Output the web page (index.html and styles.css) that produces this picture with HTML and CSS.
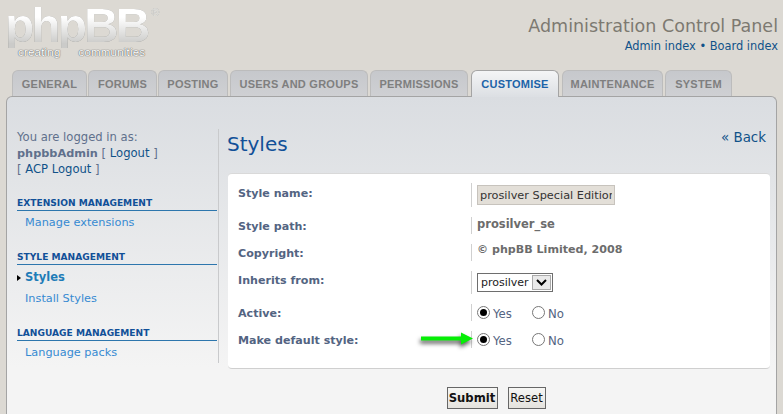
FILE: index.html
```html
<!DOCTYPE html>
<html lang="en">
  <head>
    <meta charset="UTF-8" />
    <meta name="viewport" content="width=device-width, initial-scale=1.0" />
    <title>Administration Control Panel</title>
    <link rel="stylesheet" href="styles.css">
  </head>
  <body>
    <div class="header">
      <div class="logo">
        <div class="logo-word">phpBB<sup>®</sup></div>
        <div class="logo-sub"><span>creating</span><span>communities</span></div>
      </div>
      <div class="header-right">
        <h1>Administration Control Panel</h1>
        <p><a href="#">Admin index</a> • <a href="#">Board index</a></p>
      </div>
    </div>

    <!-- Tabs -->
    <ul class="tabs">
      <li class="tab t-general">General</li>
      <li class="tab t-forums">Forums</li>
      <li class="tab t-posting">Posting</li>
      <li class="tab t-users">Users and groups</li>
      <li class="tab t-perms">Permissions</li>
      <li class="tab t-custom active">Customise</li>
      <li class="tab t-maint">Maintenance</li>
      <li class="tab t-system">System</li>
    </ul>

    <div class="panel">
      <!-- Side menu -->
      <div class="menu">
        <p class="login">You are logged in as:<br /><b>phpbbAdmin</b> [ <a href="#">Logout</a> ]<br />[ <a href="#">ACP Logout</a> ]</p>
        <h3>Extension management</h3>
        <a class="item" href="#">Manage extensions</a>
        <h3>Style management</h3>
        <a class="item current" href="#">Styles</a>
        <a class="item" href="#">Install Styles</a>
        <h3>Language management</h3>
        <a class="item" href="#">Language packs</a>
      </div>

      <!-- Main -->
      <div class="main">
        <div class="title-row">
          <h2>Styles</h2>
          <a class="back" href="#">« Back</a>
        </div>
        <div class="card">
          <div class="row row-name">
            <label>Style name:</label>
            <div class="value"><input class="text-input" type="text" value="prosilver Special Edition" /></div>
          </div>
          <div class="row row-path">
            <label>Style path:</label>
            <div class="value"><b>prosilver_se</b></div>
          </div>
          <div class="row row-copy">
            <label>Copyright:</label>
            <div class="value"><b>© phpBB Limited, 2008</b></div>
          </div>
          <div class="row row-inherit">
            <label>Inherits from:</label>
            <div class="value">
              <span class="select">prosilver<span class="select-btn"><svg width="11" height="7" viewBox="0 0 11 7"><path d="M1 1l4.500 4.500L10 1" fill="none" stroke="#000" stroke-width="2" /></svg></span></span>
            </div>
          </div>
          <div class="row row-active">
            <label>Active:</label>
            <div class="value">
              <span class="radio on"></span><span class="radio-text">Yes</span>
              <span class="radio"></span><span class="radio-text">No</span>
            </div>
          </div>
          <div class="row row-default">
            <label>Make default style:</label>
            <div class="value">
              <span class="radio on"></span><span class="radio-text">Yes</span>
              <span class="radio"></span><span class="radio-text">No</span>
            </div>
          </div>
          <!-- annotation arrow -->
          <svg class="arrow" width="60" height="22" viewBox="0 0 60 22">
            <path d="M1 7.500h41" stroke="#05ee05" stroke-width="4" />
            <path d="M41 1.500l12 6-12 6z" fill="#05ee05" />
          </svg>
        </div>
        <div class="buttons">
          <button class="btn btn-main">Submit</button>
          <button class="btn">Reset</button>
        </div>
      </div>
    </div>
  </body>
</html>
```

FILE: styles.css
```css
* {
  box-sizing: border-box;
}
html,
body {
  height: 414px;
  overflow: hidden;
}
body {
  margin: 0;
  background: #dcd9d3;
  font-family: "DejaVu Sans", Verdana, sans-serif;
  font-size: 11px;
  color: #536482;
}
a {
  color: #105289;
  text-decoration: none;
}

/* Header */
.header {
  height: 70px;
  display: flex;
  justify-content: space-between;
  padding: 0 5px;
}
.logo {
  width: 170px;
}
.logo-word {
  width: 165px;
  height: 44px;
  margin-top: 4px;
  font-family: "Liberation Sans", Arial, sans-serif;
  font-size: 48px;
  font-weight: bold;
  line-height: 44px;
  letter-spacing: -3px;
  white-space: nowrap;
  background: linear-gradient(#ffffff 30%, #cbcbc9 90%);
  -webkit-background-clip: text;
  background-clip: text;
  -webkit-text-fill-color: transparent;
  filter: drop-shadow(0 0 0.6px #8e8e8a);
}
.logo-word sup {
  font-size: 11px;
  font-weight: normal;
  letter-spacing: 0;
  line-height: 0;
  vertical-align: 26px;
  margin-left: 4px;
  -webkit-text-fill-color: #dcdcd8;
}
.logo-sub {
  display: flex;
  gap: 18px;
  padding-left: 13px;
  margin-top: -2px;
  position: relative;
  z-index: 1;
  font-family: "Liberation Sans", Arial, sans-serif;
  font-size: 11.500px;
  letter-spacing: 0.2px;
  line-height: 12px;
  color: #fff;
  text-shadow: 0 0 1px #555, 0 0 1px #555;
}
.header-right {
  text-align: right;
  padding-top: 15px;
}
.header-right h1 {
  margin: 0;
  font-size: 17.500px;
  line-height: 22px;
  font-weight: normal;
  color: #7d7971;
}
.header-right p {
  margin: 2px 0 0;
  font-size: 11.400px;
  line-height: 15px;
  color: #105289;
}

/* Tabs */
.tabs {
  list-style: none;
  display: flex;
  margin: 0;
  padding: 0 0 0 12px;
  height: 26px;
  position: relative;
  z-index: 1;
}
.tab {
  height: 26px;
  text-align: center;
  font-family: "Liberation Sans", Arial, sans-serif;
  font-size: 11px;
  font-weight: bold;
  letter-spacing: 0.25px;
  line-height: 27px;
  text-transform: uppercase;
  white-space: nowrap;
  color: #7f7f7f;
  background: linear-gradient(#c6c8cc, #cfd0d3);
  border: 1px solid #bcbcbc;
  border-bottom: 0;
  border-radius: 6px 6px 0 0;
}
.t-general { width: 75px; margin-right: 1px; }
.t-forums { width: 69px; margin-right: 1px; }
.t-posting { width: 70px; margin-right: 2px; }
.t-users { width: 138px; margin-right: 2px; }
.t-perms { width: 98px; margin-right: 3px; }
.t-custom { width: 88px; margin-right: 3px; }
.t-maint { width: 101px; margin-right: 2px; }
.t-system { width: 67px; }
.tab.active {
  color: #1c63a8;
  height: 27px;
  background: linear-gradient(#f4f5f6, #dcdfe3);
  border: 1px solid #a4a4a4;
  border-bottom: 0;
}

/* Panel */
.panel {
  margin: 0 6px;
  height: 330px;
  display: flex;
  padding: 32px 6px 0 10px;
  background: linear-gradient(#dadde1, #f4f4f4 82%);
  border: 1px solid #a4a4a4;
  border-bottom: 0;
  border-radius: 6px 6px 0 0;
}

/* Side menu */
.menu {
  width: 202px;
  height: 234px;
  padding-right: 1px;
  border-right: 1px solid #c9cacc;
  flex: none;
}
.login {
  margin: 0 0 19px;
  font-size: 11.600px;
  line-height: 16px;
  color: #60708c;
}
.login b {
  font-size: 11.300px;
  line-height: 1;
}
.login a {
  color: #105289;
}
.menu h3 {
  margin: 0 0 1px;
  font-size: 9.100px;
  line-height: 14px;
  font-weight: bold;
  text-transform: uppercase;
  white-space: nowrap;
  color: #115098;
  border-bottom: 1px solid #2d76ad;
}
.item {
  display: block;
  padding-left: 8px;
  font-size: 11.300px;
  line-height: 21px;
  color: #368ad2;
  position: relative;
}
.item + h3 {
  margin-top: 17px;
}
.item.current {
  padding-top: 1px;
  font-weight: bold;
  color: #1e7cb8;
  font-size: 11.500px;
}
.item.current::before {
  content: "";
  position: absolute;
  left: 0;
  top: 9px;
  border-left: 4px solid #000;
  border-top: 3px solid transparent;
  border-bottom: 3px solid transparent;
}

/* Main */
.main {
  flex: 1;
  padding-left: 9px;
}
.title-row {
  display: flex;
  justify-content: space-between;
  height: 43px;
  margin-top: 1px;
}
.title-row h2 {
  margin: 0 0 0 -1px;
  font-family: "DejaVu Sans", Verdana, sans-serif;
  font-weight: normal;
  font-size: 20px;
  line-height: 28px;
  color: #115098;
}
.back {
  font-size: 13.400px;
  line-height: 15px;
  padding-right: 4px;
  color: #105289;
}
.card {
  position: relative;
  height: 196px;
  padding: 9px 10px 0;
  background: #fff;
  border-top: 1px solid #d9d9d9;
  border-bottom: 1px solid #cfcfcf;
  border-radius: 4px;
}

/* Form rows */
.row {
  display: grid;
  grid-template-columns: 233px 1fr;
  align-items: stretch;
}
.row label {
  font-weight: bold;
  font-size: 11.100px;
  color: #536482;
  align-self: center;
}
.value {
  border-left: 1px solid #d0d0d0;
  padding-left: 5px;
  display: flex;
  align-items: center;
  color: #6c6c6c;
}
.row-name { height: 24px; margin-bottom: 10px; }
.row-path { height: 17px; margin-bottom: 10px; }
.row-copy { height: 17px; margin-bottom: 10px; }
.row-inherit { height: 23px; margin-bottom: 10px; }
.row-active { height: 17px; margin-bottom: 10px; }
.row-default { height: 17px; }
.row-name label { margin-top: -4px; }
.row-path label, .row-copy label { margin-top: 2px; }
.row-inherit label { margin-top: -4px; }
.row-active label, .row-default label { margin-top: 2px; }
.row-path b { margin-top: -4px; font-size: 11.500px; }
.row-copy b { margin-top: -6px; font-size: 11.100px; }
.text-input {
  width: 138px;
  height: 20px;
  padding: 0 2px;
  font-family: "DejaVu Sans", Verdana, sans-serif;
  font-size: 11.300px;
  color: #333;
  background: #e3dfd8;
  border: 1px solid #c7c3bd;
  outline: 0;
}
.select {
  display: flex;
  align-items: center;
  justify-content: space-between;
  width: 76px;
  height: 19px;
  padding: 0 1px 0 3px;
  font-size: 11px;
  color: #222;
  background: #fff;
  border: 1px solid #6e6e6e;
}
.select-btn {
  width: 19px;
  height: 15px;
  display: flex;
  align-items: center;
  justify-content: center;
  background: #e9e9e9;
  border: 1px solid #aaa;
}
.radio {
  width: 13px;
  height: 13px;
  border-radius: 50%;
  border: 1px solid #777;
  background: #fff;
  margin-right: 3px;
  flex: none;
}
.radio.on::after {
  content: "";
  display: block;
  width: 7px;
  height: 7px;
  margin: 2px;
  border-radius: 50%;
  background: #000;
}
.radio-text {
  width: 39px;
  font-size: 11.700px;
  line-height: 13px;
  color: #536482;
  margin-top: 3px;
}
.arrow {
  position: absolute;
  left: 192px;
  top: 157px;
  filter: drop-shadow(-1px 3px 2px rgba(0, 0, 0, 0.65));
}

/* Buttons */
.buttons {
  display: flex;
  justify-content: center;
  gap: 10px;
  margin-top: 18px;
  padding-right: 6px;
}
.btn {
  height: 22px;
  padding: 0;
  font-family: "DejaVu Sans", Verdana, sans-serif;
  font-size: 11.600px;
  color: #111;
  background: linear-gradient(#f6f6f4, #e4e2dd);
  border: 1px solid #666;
  width: 38px;
}
.btn-main {
  width: 51px;
  font-weight: bold;
}
```
